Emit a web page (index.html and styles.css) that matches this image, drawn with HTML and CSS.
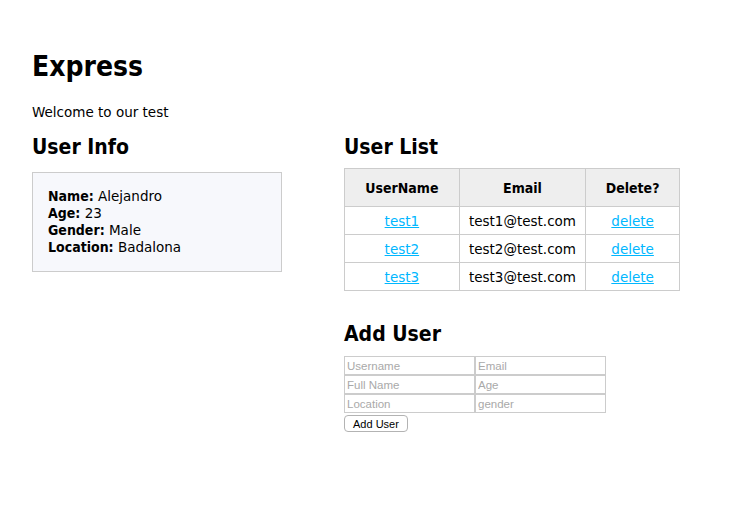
FILE: index.html
```html
<!DOCTYPE html>
<html>
<head>
<meta charset="utf-8">
<title>Express</title>
<link rel="stylesheet" href="styles.css">
</head>
<body>
<div class="page">
  <h1 class="title">Express</h1>
  <p class="welcome">Welcome to our test</p>
  <div class="columns">
    <section class="col-left">
      <h2 class="heading">User Info</h2>
      <div class="info-box">
        <div><strong>Name:</strong> Alejandro</div>
        <div><strong>Age:</strong> 23</div>
        <div><strong>Gender:</strong> Male</div>
        <div><strong>Location:</strong> Badalona</div>
      </div>
    </section>
    <section class="col-right">
      <h2 class="heading">User List</h2>
      <table class="user-table">
        <thead>
          <tr><th class="c1">UserName</th><th class="c2">Email</th><th class="c3">Delete?</th></tr>
        </thead>
        <tbody>
          <tr><td><a href="#">test1</a></td><td>test1@test.com</td><td><a href="#">delete</a></td></tr>
          <tr><td><a href="#">test2</a></td><td>test2@test.com</td><td><a href="#">delete</a></td></tr>
          <tr><td><a href="#">test3</a></td><td>test3@test.com</td><td><a href="#">delete</a></td></tr>
        </tbody>
      </table>
      <h2 class="heading add-heading">Add User</h2>
      <form class="add-form">
        <div class="fields">
          <input type="text" placeholder="Username">
          <input type="text" placeholder="Email">
          <input type="text" placeholder="Full Name">
          <input type="text" placeholder="Age">
          <input type="text" placeholder="Location">
          <input type="text" placeholder="gender">
        </div>
        <button type="button" class="add-btn">Add User</button>
      </form>
    </section>
  </div>
</div>
</body>
</html>
```

FILE: styles.css
```css
html, body {
  margin: 0;
  padding: 0;
  background: #fff;
}
body {
  font-family: "DejaVu Sans", sans-serif;
  font-size: 13.5px;
  color: #000;
}
.page {
  padding: 47px 32px 0 32px;
}
.title, .heading, strong, .user-table th {
  font-family: "DejaVu Sans Condensed", "DejaVu Sans", sans-serif;
  font-weight: bold;
}
.title {
  font-size: 28px;
  margin: 0;
  line-height: 40px;
}
.welcome {
  margin: 17px 0 0 0;
  line-height: 17px;
}
.columns {
  display: grid;
  grid-template-columns: 312px 336px;
  margin-top: 12px;
}
.heading {
  font-size: 21px;
  margin: 0;
  line-height: 28px;
}
.info-box {
  margin-top: 11px;
  width: 218px;
  border: 1px solid #ccc;
  background: #f7f8fc;
  padding: 15px 15px 15px 15px;
  line-height: 17px;
}
strong {
  font-size: 14px;
}
.user-table {
  margin-top: 7px;
  border-collapse: collapse;
  width: 336px;
  border: 1px solid #ccc;
}
.user-table th, .user-table td {
  border: 1px solid #ccc;
  text-align: center;
  padding: 0;
}
.user-table th {
  background: #eee;
  height: 37px;
  font-size: 14px;
}
.user-table td {
  height: 27px;
}
.c1 { width: 115px; }
.c2 { width: 126px; }
.c3 { width: 94px; }
.user-table a {
  color: #00b7ff;
  text-decoration: underline;
}
.add-heading {
  margin-top: 29px;
}
.add-form {
  margin-top: 8px;
}
.fields {
  display: grid;
  grid-template-columns: 131px 131px;
  width: 262px;
}
.fields input {
  box-sizing: border-box;
  height: 19px;
  width: 131px;
  margin: 0;
  border: 1px solid #ccc;
  font-family: "Liberation Sans", Arial, sans-serif;
  font-size: 11.5px;
  padding: 0 2px;
  color: #333;
  background: #fff;
  outline: none;
}
.fields input::placeholder {
  color: #a9a9a9;
}
.add-btn {
  margin-top: 2px;
  height: 17px;
  padding: 0 8px;
  border: 1px solid #b3b3b3;
  border-radius: 4px;
  background: #fff;
  font-family: "Liberation Sans", Arial, sans-serif;
  font-size: 11px;
  line-height: 14px;
  color: #000;
}
```
